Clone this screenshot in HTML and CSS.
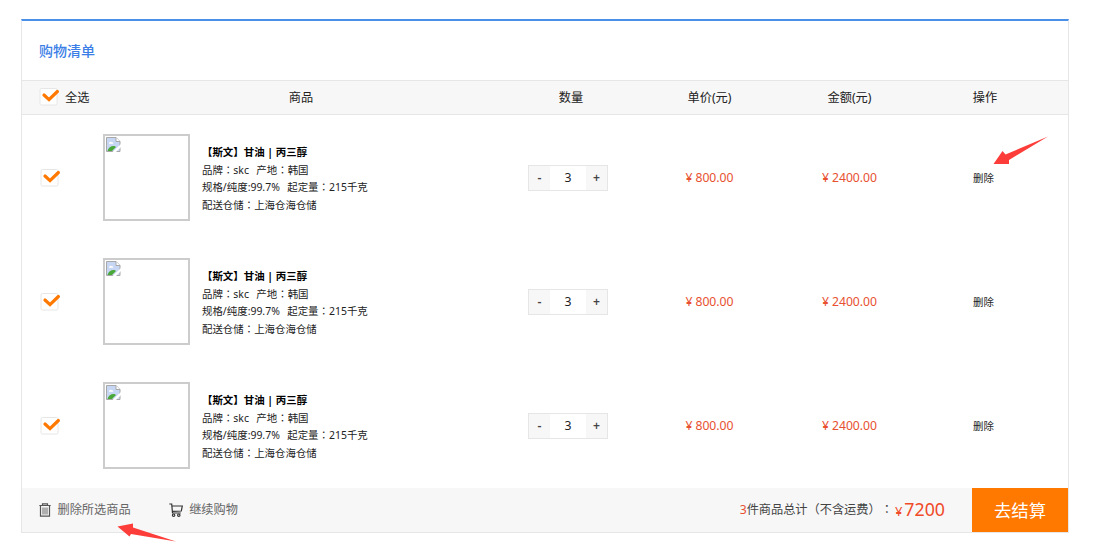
FILE: index.html
```
<!DOCTYPE html>
<html lang="zh-CN">
<head>
<meta charset="utf-8">
<title>购物清单</title>
<link rel="stylesheet" href="styles.css">
</head>
<body>
<svg class="defs" width="0" height="0" aria-hidden="true">
  <symbol id="tick" viewBox="0 0 22 20">
    <rect x="1" y="2.5" width="17" height="16.5" rx="1.5" fill="#fff" stroke="#e6e6e6"/>
    <path d="M5 9 10 13.600 18.400 5.500" fill="none" stroke="#ff7800" stroke-width="3.2" stroke-linecap="round"/>
  </symbol>
  <symbol id="broken" viewBox="0 0 15 15">
    <path d="M.5.5h9.5l4 4v10H.5z" fill="#c6d6f3" stroke="#a8a8a8"/>
    <path d="M3 6.5c0-1.6 2-2.4 2.8-1.2C7 5 7.600 6 7.200 6.800H3z" fill="#fff"/>
    <path d="M1.500 14c1-4 4-5.500 7-5L10 10l-4 4z" fill="#4aa83a"/>
    <path d="M10 .5v4h4" fill="#fff" stroke="#a8a8a8"/>
    <path d="M6.500 15 15 7v3L10 15z" fill="#fff"/>
  </symbol>
</svg>
<main class="cart">
  <h1 class="title">购物清单</h1>
  <div class="grid head">
    <label class="all"><svg class="tick"><use href="#tick"/></svg>全选</label>
    <span>商品</span><span class="head-qty">数量</span><span>单价(元)</span><span>金额(元)</span><span>操作</span>
  </div>
  <section class="grid item">
    <svg class="tick"><use href="#tick"/></svg>
    <div class="product">
      <div class="thumb"><svg><use href="#broken"/></svg></div>
      <div class="info"><b>【斯文】甘油 | 丙三醇</b><p>品牌<i lang="zh-TW">：</i>skc&nbsp; 产地<i lang="zh-TW">：</i>韩国</p><p>规格/纯度:99.7%&nbsp; 起定量<i lang="zh-TW">：</i>215千克</p><p>配送仓储<i lang="zh-TW">：</i>上海仓海仓储</p></div>
    </div>
    <div class="stepper"><button>-</button><span>3</span><button>+</button></div>
    <span class="price">¥<em>800.00</em></span><span class="price">¥<em>2400.00</em></span>
    <a class="remove">删除</a>
  </section>
  <section class="grid item">
    <svg class="tick"><use href="#tick"/></svg>
    <div class="product">
      <div class="thumb"><svg><use href="#broken"/></svg></div>
      <div class="info"><b>【斯文】甘油 | 丙三醇</b><p>品牌<i lang="zh-TW">：</i>skc&nbsp; 产地<i lang="zh-TW">：</i>韩国</p><p>规格/纯度:99.7%&nbsp; 起定量<i lang="zh-TW">：</i>215千克</p><p>配送仓储<i lang="zh-TW">：</i>上海仓海仓储</p></div>
    </div>
    <div class="stepper"><button>-</button><span>3</span><button>+</button></div>
    <span class="price">¥<em>800.00</em></span><span class="price">¥<em>2400.00</em></span>
    <a class="remove">删除</a>
  </section>
  <section class="grid item">
    <svg class="tick"><use href="#tick"/></svg>
    <div class="product">
      <div class="thumb"><svg><use href="#broken"/></svg></div>
      <div class="info"><b>【斯文】甘油 | 丙三醇</b><p>品牌<i lang="zh-TW">：</i>skc&nbsp; 产地<i lang="zh-TW">：</i>韩国</p><p>规格/纯度:99.7%&nbsp; 起定量<i lang="zh-TW">：</i>215千克</p><p>配送仓储<i lang="zh-TW">：</i>上海仓海仓储</p></div>
    </div>
    <div class="stepper"><button>-</button><span>3</span><button>+</button></div>
    <span class="price">¥<em>800.00</em></span><span class="price">¥<em>2400.00</em></span>
    <a class="remove">删除</a>
  </section>
  <footer class="foot">
    <a class="action clear"><svg width="12" height="14" viewBox="0 0 12 14" fill="none" stroke="#555"><path d="M.3 2.500h11.400M3.500 2.500V.8h5v1.700M1.500 2.500v10.700h9V2.500" stroke-width="1.200"/><path d="M4 4.500v7M6 4.500v7M8 4.500v7" stroke-width=".9"/></svg>删除所选商品</a>
    <a class="action"><svg width="14" height="14" viewBox="0 0 14 14" fill="none" stroke="#333" stroke-width="1.200"><path d="M.3 1h2.400l.8 9h8.300M3 3h10.300l-1 5-8.800.3"/><circle cx="4.600" cy="12.200" r="1.200"/><circle cx="9.800" cy="12.200" r="1.200"/></svg>继续购物</a>
    <div class="sum"><span class="count">3</span>件商品总计<i lang="zh-TW">（</i>不含运费<i lang="zh-TW">）：</i></div>
    <div class="total"><small>¥</small>7200</div>
    <button class="pay">去结算</button>
  </footer>
</main>
<svg class="arrow arrow-top" width="56" height="30" viewBox="0 0 56 30"><path d="M55 .5 12.500 18.500 9.500 15 .5 28h15.500v-4z" fill="#fc3d39"/></svg>
<svg class="arrow arrow-bottom" width="60" height="20" viewBox="0 0 60 20"><path d="M59 19.500 16 5.500V1.500L.5 4.500 12.500 14.500 14 12z" fill="#fc3d39"/></svg>
</body>
</html>
```
FILE: styles.css
```
* { box-sizing: border-box; }
body {
  margin: 0;
  padding: 19px 0 0 21px;
  background: #fff;
  color: #222;
  font: 12.2px/18px "Noto Sans", "Noto Sans CJK SC", sans-serif;
  white-space: nowrap;
  text-spacing-trim: space-all;
}
.defs, .arrow { position: absolute; }
i { font-family: "Noto Sans CJK TC", sans-serif; font-style: normal; line-height: 1; }
button { padding: 0; border: 0; font: inherit; }
.cart {
  width: 1048px;
  height: 514px;
  border: 1px solid #e6e6e6;
  border-top: 2px solid #4a90e8;
}
.title {
  height: 59px;
  margin: 0;
  padding-left: 17px;
  color: #3a7ee6;
  font-size: 14px;
  font-weight: 500;
  line-height: 59px;
}
.grid {
  display: grid;
  grid-template-columns: 81px 396px 141px 139px 141px 130px;
  align-items: center;
  justify-items: center;
}
.head {
  height: 35px;
  border: 1px solid #e6e6e6;
  border-width: 1px 0;
  background: #f7f7f7;
}
.head-qty { padding-left: 3px; }
.tick { width: 22px; height: 20px; }
.all {
  display: flex;
  align-items: center;
  justify-self: start;
  gap: 4px;
  padding-left: 17px;
}
.all .tick { margin-top: -3px; }
.item { height: 124px; padding-top: 2px; }
.item > .tick { justify-self: start; margin-left: 18px; margin-top: -2px; }
.product { display: flex; justify-self: start; align-items: center; gap: 12px; margin-top: -1px; }
.thumb { width: 87px; height: 87px; padding: 1px; border: 2px solid #ccc; }
.thumb svg { display: block; width: 15px; height: 15px; }
.info { padding-top: 3px; font-size: 10.45px; line-height: 17.5px; }
.info b { display: block; height: 17.5px; color: #000; }
.info p { height: 17.5px; margin: 0; word-spacing: 1px; }
.stepper {
  display: flex;
  width: 80px;
  height: 26px;
  margin-right: 3px;
  border: 1px solid #e6e6e6;
  line-height: 24px;
  text-align: center;
}
.stepper button { width: 21px; background: #f7f7f7; color: #444; font-weight: 600; }
.stepper span { flex: 1; }
.price { color: #e8502f; font-size: 12.2px; }
.price em { margin-left: 3px; font-style: normal; }
.remove { margin-right: 3px; font-size: 10.45px; }
.foot {
  display: flex;
  align-items: center;
  height: 44px;
  margin-top: 1px;
  padding-left: 17px;
  background: #f7f7f7;
}
.action { display: flex; align-items: center; gap: 6.5px; color: #666; }
.clear { margin-right: 38px; }
.sum { margin-left: auto; color: #444; }
.count { color: #e8502f; }
.total { margin: 0 27px 0 2px; color: #f04a28; font-size: 17.8px; }
.total small { margin-right: 2px; font-size: 13px; }
.pay {
  width: 96px;
  height: 44px;
  background: #ff7800;
  color: #fff;
  font-size: 17.4px;
}
.arrow-top { left: 993px; top: 136px; }
.arrow-bottom { left: 117px; top: 522px; }
```
